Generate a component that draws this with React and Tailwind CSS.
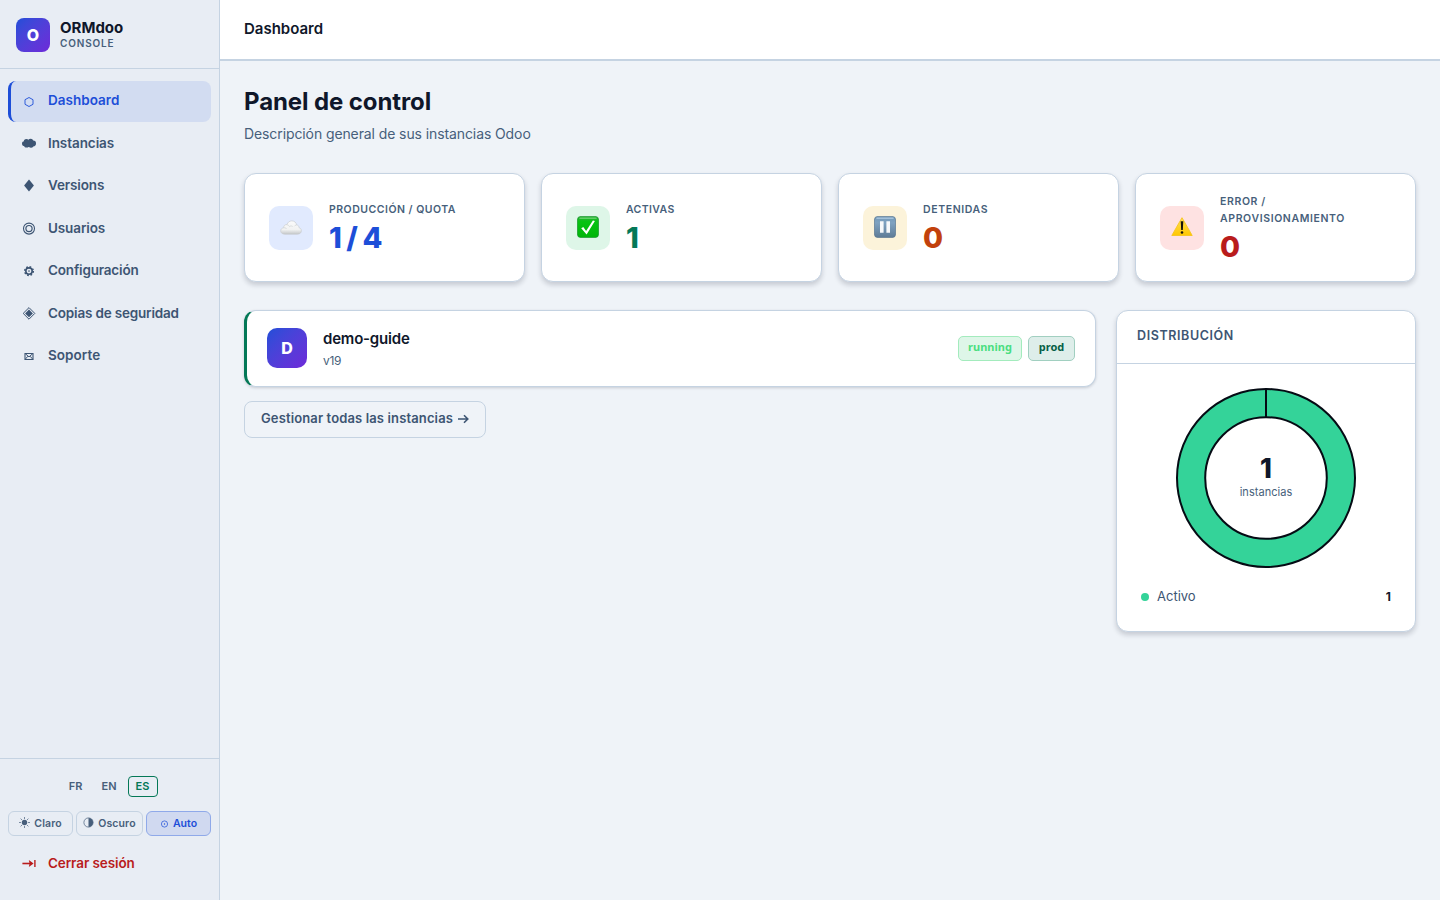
import clsx from "clsx";

const NAV = [
    { icon: "hexagon", label: "Dashboard", active: true, spacing: "tracking-[0.02px]" },
    { icon: "cloud", label: "Instancias", spacing: "tracking-[-0.07px]" },
    { icon: "diamond", label: "Versions", spacing: "tracking-[-0.12px]" },
    { icon: "rings", label: "Usuarios", spacing: "tracking-[-0.12px]" },
    { icon: "gear", label: "Configuración", spacing: "tracking-[-0.18px]" },
    { icon: "target", label: "Copias de seguridad", spacing: "tracking-[-0.18px]" },
    { icon: "mail", label: "Soporte", spacing: "tracking-[0.05px]" },
];

const STATS = [
    { icon: "cloud", label: "Producción / Quota", value: "1 / 4", tile: "bg-[#e1eafe]", color: "text-[#1d4ed8]", spacing: "tracking-[0.5px]" },
    { icon: "check", label: "Activas", value: "1", tile: "bg-[#def6e8]", color: "text-[#047857]", spacing: "tracking-[0.38px]" },
    { icon: "pause", label: "Detenidas", value: "0", tile: "bg-[#fcf3da]", color: "text-[#c2410c]", spacing: "tracking-[0.62px]" },
    { icon: "warning", label: "Error / Aprovisionamiento", value: "0", tile: "bg-[#fee2e2]", color: "text-[#b91c1c]", spacing: "tracking-[0.62px]" },
];

const GLYPHS = {
    hexagon: <path d="M9 5.5l4 2.2v4.6l-4 2.2-4-2.2V7.7z" fill="none" stroke="currentColor" strokeWidth="0.9" />,
    cloud: (
        <g fill="currentColor">
            <ellipse cx="4.6" cy="8.7" rx="2.6" ry="2.4" />
            <circle cx="6.4" cy="6.7" r="2.6" />
            <circle cx="10.6" cy="6.4" r="2.6" />
            <circle cx="13.2" cy="8.4" r="2.8" />
            <circle cx="6.6" cy="10" r="2.6" />
            <circle cx="11" cy="10" r="2.7" />
            <path d="M6 6h6v6H6z" />
        </g>
    ),
    diamond: <path d="M9 2.4l4.9 6L9 14.6 4.1 8.4z" fill="currentColor" />,
    rings: (
        <g fill="none" stroke="currentColor">
            <circle cx="9" cy="8.6" r="5.5" strokeWidth="1.1" />
            <circle cx="9" cy="8.6" r="3.1" strokeWidth="1.2" />
        </g>
    ),
    gear: (
        <g fill="none" stroke="currentColor">
            <circle cx="9" cy="9.1" r="3.2" strokeWidth="1.6" />
            <circle cx="9" cy="9.1" r="4.3" strokeWidth="1.5" strokeDasharray="1.69 1.69" />
            <circle cx="9" cy="9.1" r="0.8" fill="currentColor" stroke="none" />
        </g>
    ),
    target: (
        <g>
            <path d="M9 2.6l5.8 5.8L9 14.2 3.2 8.4z" fill="none" stroke="currentColor" strokeWidth="1" />
            <path d="M9 4.5l3.9 3.9L9 12.3 5.1 8.4z" fill="currentColor" />
        </g>
    ),
    mail: (
        <g fill="none" stroke="currentColor">
            <path d="M5 6.5h8v6H5z" strokeWidth="1.1" />
            <path d="M5.3 6.7L9 9.9l3.7-3.2M5.3 12.2l2.6-3M12.7 12.2l-2.6-3" strokeWidth="1" />
        </g>
    ),
    logout: (
        <g stroke="currentColor" fill="none">
            <path d="M2.4 8.5h9" strokeWidth="1.6" />
            <path d="M8.8 4.9l4.8 3.6-4.8 3.6.8-3.6z" fill="currentColor" stroke="none" />
            <path d="M14.9 5v7" strokeWidth="1.4" />
        </g>
    ),
};

function Glyph({ name }) {
    return (
        <svg viewBox="0 0 18 18" className="w-[18px] h-[18px] shrink-0">
            {GLYPHS[name]}
        </svg>
    );
}

// Glossy coloured icons for the stat tiles
const TILE_ICONS = {
    cloud: (
        <g>
            <defs>
                <linearGradient id="cloudFill" x1="0" y1="0" x2="0" y2="1">
                    <stop offset="0" stopColor="#fbfbfb" />
                    <stop offset="0.65" stopColor="#f1f2f2" />
                    <stop offset="1" stopColor="#c4c7c9" />
                </linearGradient>
            </defs>
            <path
                d="M4.8 18.2C2.4 18.2.7 16.9.7 15c0-1.9 1.3-3.1 3-3.3-.2-2 1.4-3.4 3.3-3.1C7.8 6.2 9.5 4.9 11.8 4.9c2.7 0 4.5 1.7 4.7 4 1.5.1 2.6 1.3 2.5 2.8 1.4.3 2.4 1.5 2.4 3 0 2.1-1.7 3.5-4.1 3.5z"
                fill="url(#cloudFill)"
                stroke="#c6c9cb"
                strokeWidth="0.6"
            />
            <path d="M3.8 11.8c1.2-.2 2.3.3 2.9 1.2M7 8.8c1.3.1 2.1.8 2.5 1.8.9-.8 2.3-.8 3.2-.1M16.5 9c-1 .1-1.7.5-2.2 1.3" fill="none" stroke="#cfd2d3" strokeWidth="0.7" />
        </g>
    ),
    check: (
        <g>
            <defs>
                <linearGradient id="checkFill" x1="0" y1="0" x2="0" y2="1">
                    <stop offset="0" stopColor="#2cae38" />
                    <stop offset="0.25" stopColor="#07c312" />
                    <stop offset="1" stopColor="#00b50a" />
                </linearGradient>
            </defs>
            <rect x="0.4" y="0.4" width="21.2" height="21.2" rx="3.5" fill="url(#checkFill)" stroke="#12932a" strokeWidth="0.7" />
            <path d="M3 2.3h16" stroke="#5fce66" strokeWidth="1.6" strokeLinecap="round" />
            <path d="M4.2 12.2l2.1-1.3 2.8 4 6.8-10.5 2 .7-8.3 13.5z" fill="#fff" />
        </g>
    ),
    pause: (
        <g>
            <defs>
                <linearGradient id="pauseFill" x1="0" y1="0" x2="0" y2="1">
                    <stop offset="0" stopColor="#7298b8" />
                    <stop offset="0.3" stopColor="#7fa2c1" />
                    <stop offset="1" stopColor="#5e7b96" />
                </linearGradient>
            </defs>
            <rect x="0.4" y="0.4" width="21.2" height="21.2" rx="3.5" fill="url(#pauseFill)" stroke="#56748f" strokeWidth="0.7" />
            <path d="M3 2.3h16" stroke="#a3c0d9" strokeWidth="1.6" strokeLinecap="round" />
            <path d="M6 5.3h3.6v11.4H6zM12.4 5.3H16v11.4h-3.6z" fill="#f6f8fa" />
        </g>
    ),
    warning: (
        <g>
            <defs>
                <linearGradient id="warnFill" x1="0" y1="0" x2="0" y2="1">
                    <stop offset="0" stopColor="#ffe05a" />
                    <stop offset="1" stopColor="#ffc700" />
                </linearGradient>
            </defs>
            <path d="M11 1.7L21.2 19.5H0.8z" fill="url(#warnFill)" stroke="#f6c51e" strokeWidth="0.9" strokeLinejoin="round" />
            <path d="M9.7 5.2h2.6l-.5 8.8h-1.6z" fill="#16140a" />
            <circle cx="11" cy="16.5" r="1.3" fill="#16140a" />
        </g>
    ),
};

function Sidebar() {
    return (
        <aside className="w-[220px] h-full shrink-0 flex flex-col bg-[#e8edf4] border-r border-[#c5d3e2]">
            {/* Brand */}
            <div className="h-[69px] shrink-0 flex items-center gap-2.5 px-4 pt-px border-b border-[#c5d3e2]">
                <div className="w-[34px] h-[34px] rounded-lg bg-linear-135 from-[#1d4ed8] to-[#6d28d9] flex items-center justify-center text-white font-extrabold text-base">
                    O
                </div>
                <div>
                    <div className="text-[15px] leading-[18px] font-bold text-[#0f172a]">ORMdoo</div>
                    <div className="text-[10px] leading-[13px] font-semibold tracking-[0.85px] text-[#475f7b]">CONSOLE</div>
                </div>
            </div>

            <nav className="flex-1 flex flex-col gap-0.5 px-2 pt-3">
                {NAV.map((item) => (
                    <a
                        key={item.label}
                        className={clsx(
                            "h-[40.5px] shrink-0 flex items-center gap-2.5 pl-[9px] rounded-lg border-l-[3px] text-[13.5px]",
                            item.active
                                ? "bg-[#d2dcf1] border-[#1d4ed8] text-[#1d4ed8] font-semibold"
                                : "border-transparent text-[#3d5573] font-[570]"
                        )}
                    >
                        <Glyph name={item.icon} />
                        <span className={clsx("-mt-[1.6px]", item.spacing)}>{item.label}</span>
                    </a>
                ))}
            </nav>

            {/* Language, theme, logout */}
            <div className="h-[142px] shrink-0 border-t border-[#c5d3e2] px-2 pt-[17px]">
                <div className="flex justify-center gap-[3px] pr-px text-[11px] font-semibold text-[#475f7b]">
                    <span className="w-[30px] h-[21px] flex items-center justify-center">FR</span>
                    <span className="w-[31px] h-[21px] flex items-center justify-center">EN</span>
                    <span className="w-[30px] h-[21px] flex items-center justify-center rounded border border-[#047857] text-[#047857]">ES</span>
                </div>
                <div className="mt-3.5 flex gap-[3px] text-[10.5px] font-semibold text-[#475f7b]">
                    <span className="w-[65px] h-[25px] flex items-center justify-center gap-1 rounded-md border border-[#c5d3e2]">
                        <svg viewBox="0 0 11 11" className="w-[11px] h-[11px] -mt-0.5" stroke="currentColor" strokeWidth="0.7">
                            <circle cx="5.5" cy="5.5" r="2.7" fill="currentColor" stroke="none" />
                            <path d="M5.5 0v2M5.5 9v2M0 5.5h2M9 5.5h2M1.6 1.6L3 3M8 8l1.4 1.4M1.6 9.4L3 8M8 3l1.4-1.4" />
                        </svg>
                        <span className="tracking-[0.1px]">Claro</span>
                    </span>
                    <span className="w-[67px] h-[25px] flex items-center justify-center gap-1 rounded-md border border-[#c5d3e2]">
                        <svg viewBox="0 0 11 11" className="w-[11px] h-[11px] -mt-0.5">
                            <circle cx="5.5" cy="5.5" r="4.6" fill="none" stroke="currentColor" strokeWidth="0.7" />
                            <path d="M5.5 0.9a4.6 4.6 0 010 9.2z" fill="currentColor" />
                        </svg>
                        <span className="tracking-[0.1px]">Oscuro</span>
                    </span>
                    <span className="w-[65px] h-[25px] flex items-center justify-center gap-1 rounded-md border border-[#8fa9e9] bg-[#d0d9f0] text-[#1d4ed8]">
                        <svg viewBox="0 0 9 9" className="w-[9px] h-[9px]">
                            <circle cx="4.5" cy="5" r="3.1" fill="none" stroke="currentColor" strokeWidth="0.7" />
                            <circle cx="4.5" cy="5" r="0.7" fill="currentColor" />
                        </svg>
                        <span>Auto</span>
                    </span>
                </div>
                <a className="mt-[7px] h-[41px] flex items-center gap-2.5 pl-3 text-[13.5px] font-[570] tracking-[-0.1px] text-[#b91c1c]">
                    <Glyph name="logout" />
                    <span>Cerrar sesión</span>
                </a>
            </div>
        </aside>
    );
}

function StatCard({ icon, label, value, tile, color, spacing }) {
    return (
        <div className="h-[109px] flex items-center gap-4 px-6 rounded-xl bg-white border border-[#c5d3e2] shadow-[0_3px_5px_rgba(15,23,42,0.18)]">
            <div className={clsx("w-11 h-11 shrink-0 rounded-[10px] flex items-center justify-center pb-0.5", tile)}>
                <svg viewBox="0 0 22 22" className="w-[22px] h-[22px]">
                    {TILE_ICONS[icon]}
                </svg>
            </div>
            <div>
                <div className={clsx("text-[10.5px] leading-[17px] font-semibold uppercase text-[#475f7b]", spacing)}>{label}</div>
                <div className={clsx("mt-[3px] text-[29px] leading-[33px] font-extrabold tracking-[-0.9px]", color)}>{value}</div>
            </div>
        </div>
    );
}

function Distribution() {
    return (
        <section className="w-[300px] h-[322px] shrink-0 rounded-xl bg-white border border-[#c5d3e2] shadow-[0_3px_5px_rgba(15,23,42,0.18)]">
            <div className="h-[53px] px-5 pb-0.5 flex items-center border-b border-[#c5d3e2] text-[12.5px] font-semibold tracking-[0.6px] text-[#3d5573]">
                DISTRIBUCIÓN
            </div>
            <div className="relative mt-6 mx-auto w-[180px] h-[180px]">
                <svg viewBox="0 0 180 180" className="w-full h-full">
                    <circle cx="90" cy="90" r="75" fill="none" stroke="#34d399" strokeWidth="28" />
                    <circle cx="90" cy="90" r="89" fill="none" stroke="#050b14" strokeWidth="2" />
                    <circle cx="90" cy="90" r="60.8" fill="none" stroke="#050b14" strokeWidth="2" />
                    <path d="M90 1v28" stroke="#050b14" strokeWidth="2" />
                </svg>
                <div className="absolute inset-0 flex flex-col items-center justify-center">
                    <span className="text-[27px] leading-7 font-extrabold text-[#0f172a]">1</span>
                    <span className="text-[11px] leading-[18px] tracking-[0.05px] text-[#475f7b]">instancias</span>
                </div>
            </div>
            <div className="mt-[18px] px-6 flex items-center text-[13px] leading-[21px]">
                <span className="w-2 h-2 rounded-full bg-[#34d399] mr-2" />
                <span className="text-[#3d5573]">Activo</span>
                <span className="ml-auto text-[12px] font-bold text-[#0f172a]">1</span>
            </div>
        </section>
    );
}

export default function App() {
    return (
        <div className="w-full h-screen flex overflow-hidden bg-[#eff3f8] font-['Inter',sans-serif]">
            <Sidebar />
            <div className="flex-1 flex flex-col">
                <header className="h-[61px] shrink-0 flex items-center px-6 pb-px bg-white border-b-2 border-[#c5d3e2] text-[15px] font-semibold text-[#0f172a]">
                    Dashboard
                </header>

                <main className="px-6 pt-6">
                    <h1 className="text-[24px] leading-[34px] font-bold tracking-[-0.1px] text-[#0f172a]">Panel de control</h1>
                    <p className="mt-1 text-[14px] leading-[22px] tracking-[-0.1px] text-[#475f7b]">Descripción general de sus instancias Odoo</p>

                    <div className="mt-7 grid grid-cols-4 gap-4">
                        {STATS.map((s) => (
                            <StatCard key={s.label} {...s} />
                        ))}
                    </div>

                    <div className="mt-7 flex items-start gap-5">
                        <div className="flex-1">
                            {/* Instance row */}
                            <div className="h-[77px] flex items-center pl-5 pr-5 rounded-xl bg-white border border-l-[3px] border-[#c5d3e2] border-l-[#047857] shadow-[0_1px_3px_rgba(15,23,42,0.18)]">
                                <div className="w-10 h-10 -mt-0.5 rounded-[10px] bg-linear-135 from-[#1d4ed8] to-[#6d28d9] flex items-center justify-center text-white text-base font-extrabold">
                                    D
                                </div>
                                <div className="ml-4 -mt-px">
                                    <div className="text-[15px] leading-[23px] font-semibold tracking-[-0.2px] text-[#0f172a]">demo-guide</div>
                                    <div className="mt-0.5 text-[12px] leading-[18px] text-[#475f7b] tracking-[-0.3px]">v19</div>
                                </div>
                                <div className="ml-auto flex gap-1.5 font-['Noto_Sans',sans-serif] text-[11px] font-bold">
                                    <span className="w-16 h-[25px] pb-0.5 flex items-center justify-center rounded-[5px] border border-[#a3ebbd] bg-[#def6e8] text-[#4ade80]">running</span>
                                    <span className="w-[47px] h-[25px] pb-0.5 flex items-center justify-center rounded-[5px] border border-[#a1cfc0] bg-[#deeeea] text-[#065f46]">prod</span>
                                </div>
                            </div>
                            <button className="mt-3.5 w-[242px] h-[37px] pb-0.5 flex items-center justify-center gap-1 rounded-lg border border-[#c5d3e2] text-[13px] font-semibold tracking-[0.13px] text-[#3d5573]">
                                Gestionar todas las instancias
                                <svg viewBox="0 0 12 12" className="w-3 h-3" fill="none" stroke="currentColor" strokeWidth="1.6">
                                    <path d="M1 6h9.5M7 2.2L10.8 6 7 9.8" />
                                </svg>
                            </button>
                        </div>
                        <Distribution />
                    </div>
                </main>
            </div>
        </div>
    );
}
